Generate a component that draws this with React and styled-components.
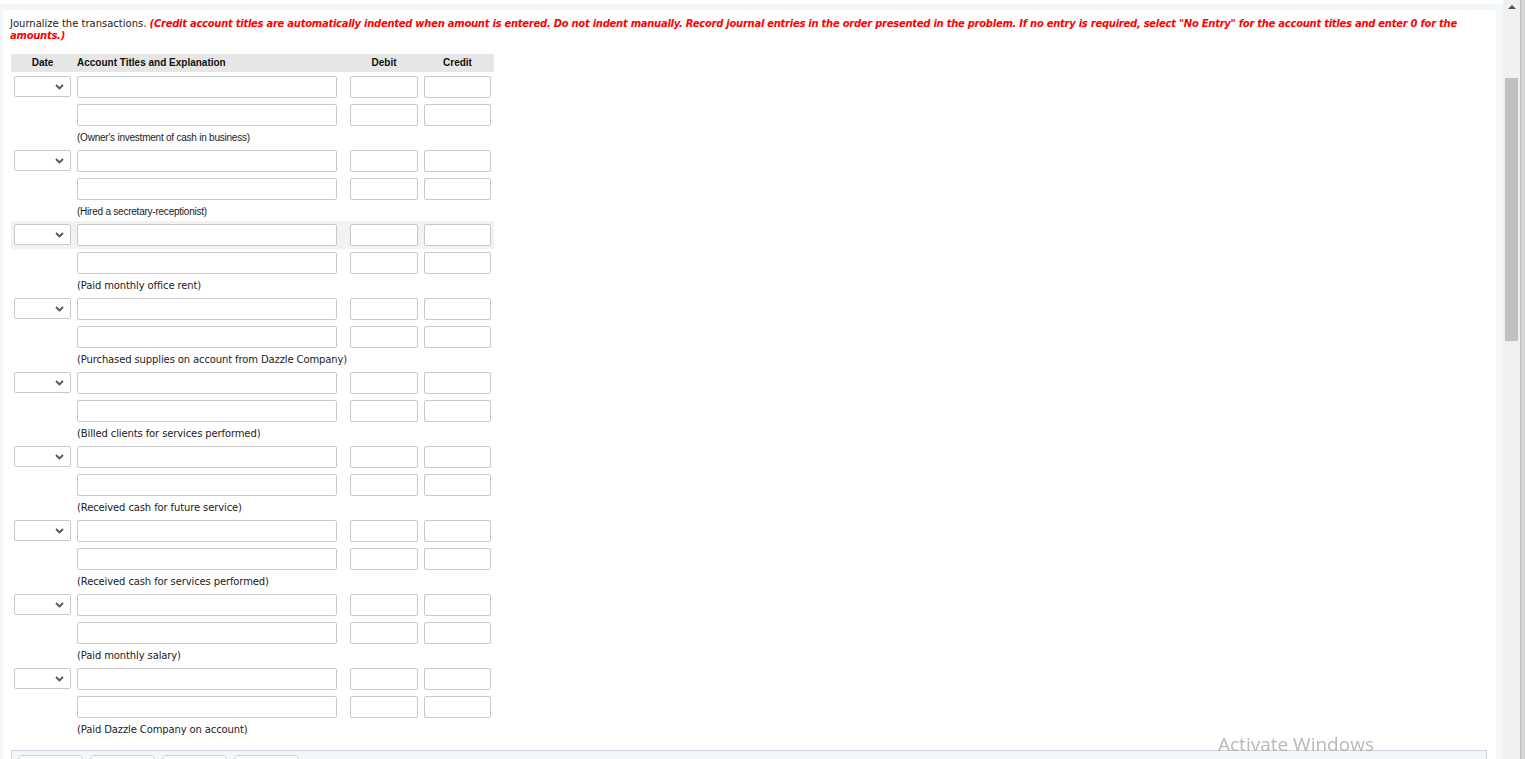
import styled, { createGlobalStyle } from "styled-components";

const GlobalStyle = createGlobalStyle`
  html, body {
    margin: 0;
    padding: 0;
    height: 100%;
    overflow: hidden;
    background: #ffffff;
  }
  #root {
    height: 100%;
  }
`;

const explanations = [
  { text: "(Owner's investment of cash in business)", narrow: true },
  { text: "(Hired a secretary-receptionist)", narrow: true },
  { text: "(Paid monthly office rent)" },
  { text: "(Purchased supplies on account from Dazzle Company)" },
  { text: "(Billed clients for services performed)" },
  { text: "(Received cash for future service)" },
  { text: "(Received cash for services performed)" },
  { text: "(Paid monthly salary)" },
  { text: "(Paid Dazzle Company on account)" },
];

function Chevron() {
  return (
    <svg width="9" height="6" viewBox="0 0 9 6">
      <path d="M1 1l3.5 3.5L8 1" fill="none" stroke="#555" strokeWidth="1.8" />
    </svg>
  );
}

function EntryRow({ withDate, highlight }) {
  return (
    <Row $highlight={highlight}>
      <Cell>
        {withDate && (
          <SelectBox>
            <Chevron />
          </SelectBox>
        )}
      </Cell>
      <Cell>
        <TextField />
      </Cell>
      <Cell />
      <Cell>
        <TextField />
      </Cell>
      <Cell>
        <TextField />
      </Cell>
    </Row>
  );
}

export default function App() {
  return (
    <>
      <GlobalStyle />
      <Screen>
        <Main>
          <Frame>
            <Panel>
              <Instructions>
                Journalize the transactions.{" "}
                <Warning>
                  (Credit account titles are automatically indented when amount is entered. Do not indent manually. Record journal entries in the order presented in the problem. If no entry is required, select "No Entry" for the account titles and enter 0 for the amounts.)
                </Warning>
              </Instructions>
              <Journal>
                <HeadRow>
                  <HeadCell $align="center">Date</HeadCell>
                  <HeadCell>Account Titles and Explanation</HeadCell>
                  <HeadCell />
                  <HeadCell $align="center">Debit</HeadCell>
                  <HeadCell $align="center">Credit</HeadCell>
                </HeadRow>
                {explanations.map((item, i) => (
                  <Group key={i}>
                    <EntryRow withDate highlight={i === 2} />
                    <EntryRow />
                    <Note $narrow={item.narrow}>{item.text}</Note>
                  </Group>
                ))}
              </Journal>
              <Toolbar>
                <Tab />
                <Tab />
                <Tab />
                <Tab />
              </Toolbar>
            </Panel>
          </Frame>
        </Main>
        <Scrollbar>
          <ArrowUp />
          <Thumb />
        </Scrollbar>
        <WindowEdge />
      </Screen>
      <Watermark>Activate Windows</Watermark>
    </>
  );
}

const Screen = styled.div`
  display: flex;
  height: 100%;
`;

const Main = styled.div`
  flex: 1;
  padding-top: 4px;
  background: #ffffff;
  display: flex;
  flex-direction: column;
  min-width: 0;
`;

const Frame = styled.div`
  flex: 1;
  background: #f4f7fa;
  padding: 6px 7px 0 3px;
  display: flex;
  flex-direction: column;
`;

const Panel = styled.div`
  flex: 1;
  background: #ffffff;
  padding: 8px 7px 0 7px;
`;

const Instructions = styled.div`
  font-family: "DejaVu Sans", Verdana, sans-serif;
  font-size: 10px;
  line-height: 12px;
  color: #222;
  padding-right: 10px;
`;

const Warning = styled.span`
  color: #ff0000;
  font-weight: bold;
  font-style: italic;
  letter-spacing: -0.27px;
`;

const Journal = styled.div`
  margin: 12px 0 0 1px;
  width: 483px;
  display: grid;
  grid-template-columns: 63px 266px 7px 74px 73px;
`;

const HeadRow = styled.div`
  display: contents;
`;

const HeadCell = styled.div`
  background: #e6e6e6;
  height: 18px;
  line-height: 18px;
  padding: 0 3px;
  font-family: "Liberation Sans", Arial, sans-serif;
  font-weight: bold;
  font-size: 10px;
  color: #111;
  text-align: ${(p) => p.$align || "left"};
  margin-bottom: 1px;
`;

const Group = styled.div`
  display: contents;
`;

const Row = styled.div`
  display: contents;
  & > div {
    background: ${(p) => (p.$highlight ? "#f2f2f2" : "transparent")};
  }
`;

const Cell = styled.div`
  height: 28px;
  padding: 3px;
  box-sizing: border-box;
`;

const TextField = styled.div`
  height: 22px;
  box-sizing: border-box;
  border: 1px solid #c9c9c9;
  border-radius: 2px;
  background: #ffffff;
`;

const SelectBox = styled.div`
  height: 21px;
  box-sizing: border-box;
  border: 1px solid #c9c9c9;
  border-radius: 2px;
  background: #ffffff;
  display: flex;
  align-items: center;
  justify-content: flex-end;
  padding-right: 6px;
`;

const Note = styled.div`
  grid-column: 2 / 6;
  height: 18px;
  line-height: 17px;
  padding: 0 3px;
  font-family: ${(p) =>
    p.$narrow
      ? '"Liberation Sans", Tahoma, sans-serif'
      : '"DejaVu Sans", Verdana, sans-serif'};
  font-size: 10px;
  letter-spacing: ${(p) => (p.$narrow ? "-0.23px" : "-0.12px")};
  color: #222;
  white-space: nowrap;
`;

const Toolbar = styled.div`
  margin: 11px 2px 0 1px;
  height: 30px;
  background: #f4f7fa;
  border: 1px solid #cdd6e0;
  display: flex;
  gap: 7px;
  padding: 4px 6px 0 6px;
`;

const Tab = styled.div`
  width: 65px;
  height: 26px;
  box-sizing: border-box;
  background: #fbfcfd;
  border: 1px solid #cdd6e0;
  border-radius: 4px;
`;

const Scrollbar = styled.div`
  width: 17px;
  background: #f0f0f0;
  display: flex;
  flex-direction: column;
  align-items: center;
  padding-top: 5px;
`;

const ArrowUp = styled.div`
  width: 0;
  height: 0;
  border-left: 4px solid transparent;
  border-right: 4px solid transparent;
  border-bottom: 4px solid #505050;
`;

const Thumb = styled.div`
  margin-top: 69px;
  width: 13px;
  height: 263px;
  background: #c1c1c1;
`;

const WindowEdge = styled.div`
  width: 5px;
  background: #d6d6d6;
  border-left: 1px solid #bdbdbd;
  box-sizing: border-box;
`;

const Watermark = styled.div`
  position: fixed;
  left: 1218px;
  top: 731px;
  font-family: "Open Sans", "Noto Sans", sans-serif;
  font-size: 19px;
  color: rgba(160, 160, 160, 0.75);
  pointer-events: none;
`;
